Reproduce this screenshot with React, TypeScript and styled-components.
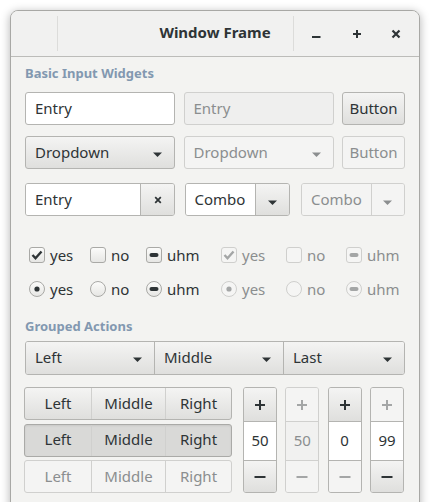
import styled, { createGlobalStyle, css } from "styled-components";

const GlobalStyle = createGlobalStyle`
  html, body {
    margin: 0;
    padding: 0;
    background: #ffffff;
    overflow: hidden;
  }
  body {
    font-family: "Noto Sans", "DejaVu Sans", sans-serif;
    color: #2e3436;
  }
`;

const TEXT = "#2e3436";
const MUTED = "#8b8e8f";
const BORDER = "#b4b4b1";
const BORDER_OFF = "#d0d0ce";

const raised = css`
  background: linear-gradient(to bottom, #f4f4f3, #dfdfdd);
`;
const pressed = css`
  background: #d9d9d7;
  box-shadow: inset 0 1px 2px rgba(0, 0, 0, 0.08);
`;
const flat = css`
  background: #f4f4f3;
`;

const Page = styled.div`
  padding: 10px 10px 0 10px;
  height: 502px;
  box-sizing: border-box;
`;

const Window = styled.div`
  width: 410px;
  height: 530px;
  box-sizing: border-box;
  border: 1px solid #a8a8a5;
  border-radius: 8px 8px 0 0;
  background: #f3f3f1;
  box-shadow: 0 2px 9px 1px rgba(0, 0, 0, 0.25);
  overflow: hidden;
`;

const TitleBar = styled.header`
  display: grid;
  grid-template-columns: 1fr auto 1fr;
  align-items: center;
  height: 45px;
  background: #f1f1f0;
  border-bottom: 1px solid #bcbcb9;
`;

const TitleStart = styled.div`
  display: flex;
  align-items: center;
  height: 100%;
  padding-left: 46px;
`;

const TitleEnd = styled.div`
  display: flex;
  align-items: center;
  justify-content: flex-end;
  height: 100%;
  padding-right: 3px;
`;

const Separator = styled.span`
  width: 1px;
  height: 35px;
  background: #dcdcda;
  margin-right: 2px;
`;

const Title = styled.h1`
  margin: 0 0 3px 0;
  font-size: 15px;
  font-weight: 700;
  color: ${TEXT};
`;

const TitleButton = styled.span`
  width: 40px;
  height: 100%;
  display: flex;
  align-items: center;
  justify-content: center;
  color: ${TEXT};
`;

const Content = styled.main`
  padding: 8px 14px 0 14px;
  display: flex;
  flex-direction: column;
`;

const SectionLabel = styled.h2<{ $after: number }>`
  margin: 0 0 ${(p) => p.$after}px 0;
  font-size: 13px;
  line-height: 17px;
  font-weight: 700;
  color: #8298b0;
`;

const WidgetRow = styled.div<{ $after: number }>`
  display: flex;
  justify-content: space-between;
  height: 33px;
  margin-bottom: ${(p) => p.$after}px;
`;

const Entry = styled.div<{ $w: number; $off?: boolean }>`
  box-sizing: border-box;
  width: ${(p) => p.$w}px;
  height: 33px;
  display: flex;
  align-items: center;
  padding: 0 9px 2px 9px;
  border: 1px solid ${(p) => (p.$off ? BORDER_OFF : BORDER)};
  border-radius: 3px;
  background: ${(p) => (p.$off ? "#efefee" : "#ffffff")};
  color: ${(p) => (p.$off ? MUTED : TEXT)};
  font-size: 15px;
`;

const Button = styled.div<{ $w: number; $off?: boolean }>`
  box-sizing: border-box;
  width: ${(p) => p.$w}px;
  height: 33px;
  display: flex;
  align-items: center;
  justify-content: center;
  padding-bottom: 2px;
  border: 1px solid ${(p) => (p.$off ? BORDER_OFF : BORDER)};
  border-radius: 3px;
  ${(p) => (p.$off ? flat : raised)};
  color: ${(p) => (p.$off ? MUTED : TEXT)};
  font-size: 15px;
`;

const Dropdown = styled.div<{ $w: number; $off?: boolean }>`
  box-sizing: border-box;
  width: ${(p) => p.$w}px;
  height: 33px;
  display: flex;
  align-items: center;
  justify-content: space-between;
  padding: 0 12px 2px 9px;
  border: 1px solid ${(p) => (p.$off ? BORDER_OFF : BORDER)};
  border-radius: 3px;
  ${(p) => (p.$off ? flat : raised)};
  color: ${(p) => (p.$off ? MUTED : TEXT)};
  font-size: 15px;
`;

const ArrowIcon = styled.svg<{ $drop: number }>`
  flex: none;
  margin-top: ${(p) => p.$drop}px;
`;

const Linked = styled.div<{ $w: number; $off?: boolean; $pull?: number }>`
  box-sizing: border-box;
  width: ${(p) => p.$w}px;
  height: 33px;
  display: flex;
  margin-left: ${(p) => -(p.$pull ?? 0)}px;
  border: 1px solid ${(p) => (p.$off ? BORDER_OFF : BORDER)};
  border-radius: 3px;
  overflow: hidden;
  color: ${(p) => (p.$off ? MUTED : TEXT)};
  font-size: 15px;
`;

const LinkedText = styled.div<{ $off?: boolean }>`
  flex: 1;
  display: flex;
  align-items: center;
  padding: 0 9px 2px 9px;
  background: ${(p) => (p.$off ? "#f4f4f3" : "#ffffff")};
`;

const LinkedIcon = styled.div<{ $off?: boolean }>`
  width: 33px;
  display: flex;
  align-items: center;
  justify-content: center;
  border-left: 1px solid ${(p) => (p.$off ? BORDER_OFF : BORDER)};
  ${(p) => (p.$off ? flat : raised)};
`;

const ChoiceGrid = styled.div<{ $after: number }>`
  display: grid;
  grid-template-columns: 61px 56px 75px 65px 60px 1fr;
  align-items: center;
  height: 24px;
  margin: 0 0 ${(p) => p.$after}px 4px;
`;

const Choice = styled.label<{ $off?: boolean }>`
  display: flex;
  align-items: center;
  gap: 5px;
  font-size: 15px;
  color: ${(p) => (p.$off ? MUTED : TEXT)};
`;

const Mark = styled.span<{ $round?: boolean; $off?: boolean }>`
  box-sizing: border-box;
  width: 16px;
  height: 16px;
  display: flex;
  align-items: center;
  justify-content: center;
  border: 1px solid ${(p) => (p.$off ? "#cfcfcd" : "#a9a9a6")};
  border-radius: ${(p) => (p.$round ? "50%" : "3px")};
  background: ${(p) =>
    p.$off ? "#f5f5f4" : "linear-gradient(to bottom, #fbfbfa, #e6e6e4)"};
  color: ${(p) => (p.$off ? "#a4a6a6" : TEXT)};
`;

const GroupBar = styled.div`
  box-sizing: border-box;
  height: 34px;
  display: grid;
  grid-template-columns: 128px 129px 1fr;
  border: 1px solid ${BORDER};
  border-radius: 3px;
  overflow: hidden;
  margin-bottom: 12px;
`;

const GroupItem = styled.div`
  display: flex;
  align-items: center;
  justify-content: space-between;
  padding: 0 12px 2px 9px;
  font-size: 15px;
  color: ${TEXT};
  ${raised};
  & + & {
    border-left: 1px solid ${BORDER};
  }
`;

const Bottom = styled.div`
  display: flex;
  gap: 11px;
  margin-left: -1px;
`;

const ButtonStack = styled.div`
  width: 208px;
  height: 106px;
  display: flex;
  flex-direction: column;
  justify-content: space-between;
`;

const SegRow = styled.div<{ $state: "normal" | "active" | "off" }>`
  box-sizing: border-box;
  height: 33px;
  display: grid;
  grid-template-columns: 66px 74px 1fr;
  border: 1px solid
    ${(p) => (p.$state === "off" ? BORDER_OFF : p.$state === "active" ? "#aaaaa7" : BORDER)};
  border-radius: 3px;
  overflow: hidden;
  color: ${(p) => (p.$state === "off" ? MUTED : TEXT)};
  ${(p) => (p.$state === "off" ? flat : p.$state === "active" ? pressed : raised)};
`;

const Seg = styled.div<{ $off?: boolean }>`
  display: flex;
  align-items: center;
  justify-content: center;
  padding-bottom: 2px;
  font-size: 15px;
  & + & {
    border-left: 1px solid ${(p) => (p.$off ? BORDER_OFF : BORDER)};
  }
`;

const Spins = styled.div`
  flex: 1;
  display: flex;
  justify-content: space-between;
  padding-right: 1px;
`;

const Spin = styled.div<{ $off?: boolean }>`
  box-sizing: border-box;
  width: 34px;
  height: 106px;
  display: flex;
  flex-direction: column;
  border: 1px solid ${(p) => (p.$off ? BORDER_OFF : BORDER)};
  border-radius: 3px;
  overflow: hidden;
`;

const SpinStep = styled.div<{ $off?: boolean; $h: number }>`
  height: ${(p) => p.$h}px;
  display: flex;
  align-items: center;
  justify-content: center;
  color: ${(p) => (p.$off ? "#a4a6a6" : TEXT)};
  ${(p) => (p.$off ? flat : raised)};
`;

const SpinValue = styled.div<{ $off?: boolean }>`
  box-sizing: border-box;
  height: 40px;
  display: flex;
  align-items: center;
  justify-content: center;
  padding-bottom: 2px;
  border-top: 1px solid ${(p) => (p.$off ? BORDER_OFF : BORDER)};
  border-bottom: 1px solid ${(p) => (p.$off ? BORDER_OFF : BORDER)};
  background: ${(p) => (p.$off ? "#f1f1f0" : "#ffffff")};
  color: ${(p) => (p.$off ? MUTED : TEXT)};
  font-size: 15px;
`;

function Arrow({ drop = 4 }: { drop?: number }) {
  return (
    <ArrowIcon $drop={drop} width="9" height="5" viewBox="0 0 9 5">
      <path d="M0 0.5 H9 L4.5 5 Z" fill="currentColor" />
    </ArrowIcon>
  );
}

function Plus() {
  return (
    <svg width="12" height="12" viewBox="0 0 12 12">
      <path d="M6 1 V11 M1 6 H11" stroke="currentColor" strokeWidth="2" />
    </svg>
  );
}

function Minus() {
  return (
    <svg width="12" height="12" viewBox="0 0 12 12">
      <path d="M0.5 6 H11.5" stroke="currentColor" strokeWidth="2" />
    </svg>
  );
}

function Cross({ size }: { size: number }) {
  return (
    <svg width={size} height={size} viewBox="0 0 10 10">
      <path d="M1.5 1.5 L8.5 8.5 M8.5 1.5 L1.5 8.5" stroke="currentColor" strokeWidth="2.2" />
    </svg>
  );
}

type ChoiceState = "on" | "off" | "mixed";

function CheckMark({ state, round }: { state: ChoiceState; round?: boolean }) {
  if (state === "off") return null;
  if (state === "mixed")
    return (
      <svg width="10" height="4" viewBox="0 0 10 4">
        <rect x="0.5" y="0" width="9" height="4" rx="2" fill="currentColor" />
      </svg>
    );
  if (round)
    return (
      <svg width="6" height="6" viewBox="0 0 6 6">
        <circle cx="3" cy="3" r="2.6" fill="currentColor" />
      </svg>
    );
  return (
    <svg width="12" height="12" viewBox="0 0 12 12">
      <path d="M1.5 6 L4.5 9.2 L10.5 2.5" stroke="currentColor" strokeWidth="2.4" fill="none" />
    </svg>
  );
}

const choices: { label: string; state: ChoiceState; off?: boolean }[] = [
  { label: "yes", state: "on" },
  { label: "no", state: "off" },
  { label: "uhm", state: "mixed" },
  { label: "yes", state: "on", off: true },
  { label: "no", state: "off", off: true },
  { label: "uhm", state: "mixed", off: true },
];

const spins = [
  { value: "50", plusOff: false, minusOff: false, off: false },
  { value: "50", plusOff: true, minusOff: true, off: true },
  { value: "0", plusOff: false, minusOff: true, off: false },
  { value: "99", plusOff: true, minusOff: false, off: false },
];

const segRows: ("normal" | "active" | "off")[] = ["normal", "active", "off"];

export default function App() {
  return (
    <Page>
      <GlobalStyle />
      <Window>
        <TitleBar>
          <TitleStart>
            <Separator />
          </TitleStart>
          <Title>Window Frame</Title>
          <TitleEnd>
            <Separator />
            <TitleButton>
              <svg width="16" height="16" viewBox="0 0 16 16">
                <rect x="4" y="10" width="8.5" height="2" fill="currentColor" />
              </svg>
            </TitleButton>
            <TitleButton>
              <svg width="16" height="16" viewBox="0 0 16 16">
                <path d="M9 4 V12 M5 8 H13" stroke="currentColor" strokeWidth="2" />
              </svg>
            </TitleButton>
            <TitleButton>
              <svg width="16" height="16" viewBox="0 0 16 16">
                <path d="M4.5 4.5 L11.5 11.5 M11.5 4.5 L4.5 11.5" stroke="currentColor" strokeWidth="2.2" />
              </svg>
            </TitleButton>
          </TitleEnd>
        </TitleBar>

        <Content>
          <SectionLabel $after={10}>Basic Input Widgets</SectionLabel>

          <WidgetRow $after={11}>
            <Entry $w={150}>Entry</Entry>
            <Entry $w={150} $off>
              Entry
            </Entry>
            <Button $w={63}>Button</Button>
          </WidgetRow>

          <WidgetRow $after={14}>
            <Dropdown $w={150}>
              Dropdown
              <Arrow drop={6} />
            </Dropdown>
            <Dropdown $w={150} $off>
              Dropdown
              <Arrow drop={6} />
            </Dropdown>
            <Button $w={63} $off>
              Button
            </Button>
          </WidgetRow>

          <WidgetRow $after={27}>
            <Linked $w={150}>
              <LinkedText>Entry</LinkedText>
              <LinkedIcon>
                <Cross size={8} />
              </LinkedIcon>
            </Linked>
            <Linked $w={105} $pull={2}>
              <LinkedText>Combo</LinkedText>
              <LinkedIcon>
                <Arrow drop={5} />
              </LinkedIcon>
            </Linked>
            <Linked $w={104} $off>
              <LinkedText $off>Combo</LinkedText>
              <LinkedIcon $off>
                <Arrow drop={5} />
              </LinkedIcon>
            </Linked>
          </WidgetRow>

          <ChoiceGrid $after={10}>
            {choices.map((c, i) => (
              <Choice key={i} $off={c.off}>
                <Mark $off={c.off}>
                  <CheckMark state={c.state} />
                </Mark>
                {c.label}
              </Choice>
            ))}
          </ChoiceGrid>

          <ChoiceGrid $after={17}>
            {choices.map((c, i) => (
              <Choice key={i} $off={c.off}>
                <Mark $round $off={c.off}>
                  <CheckMark state={c.state} round />
                </Mark>
                {c.label}
              </Choice>
            ))}
          </ChoiceGrid>

          <SectionLabel $after={6}>Grouped Actions</SectionLabel>

          <GroupBar>
            <GroupItem>
              Left
              <Arrow drop={4} />
            </GroupItem>
            <GroupItem>
              Middle
              <Arrow drop={4} />
            </GroupItem>
            <GroupItem>
              Last
              <Arrow drop={4} />
            </GroupItem>
          </GroupBar>

          <Bottom>
            <ButtonStack>
              {segRows.map((s) => (
                <SegRow key={s} $state={s}>
                  <Seg $off={s === "off"}>Left</Seg>
                  <Seg $off={s === "off"}>Middle</Seg>
                  <Seg $off={s === "off"}>Right</Seg>
                </SegRow>
              ))}
            </ButtonStack>
            <Spins>
              {spins.map((s, i) => (
                <Spin key={i} $off={s.off}>
                  <SpinStep $h={33} $off={s.plusOff}>
                    <Plus />
                  </SpinStep>
                  <SpinValue $off={s.off}>{s.value}</SpinValue>
                  <SpinStep $h={31} $off={s.minusOff}>
                    <Minus />
                  </SpinStep>
                </Spin>
              ))}
            </Spins>
          </Bottom>
        </Content>
      </Window>
    </Page>
  );
}
